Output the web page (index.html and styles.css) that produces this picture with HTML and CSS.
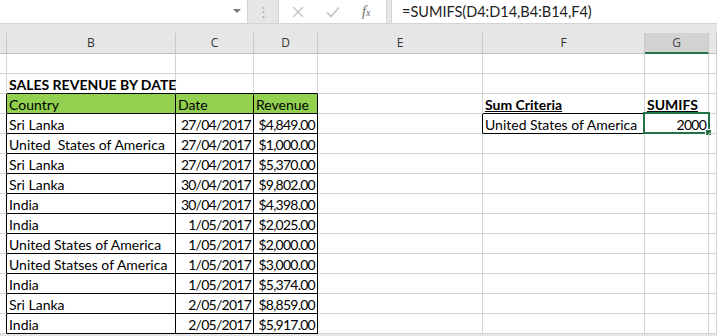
FILE: index.html
```html
<!DOCTYPE html>
<html lang="en">
<head>
    <meta charset="UTF-8">
    <title>SUMIFS by date</title>
    <link rel="stylesheet" href="styles.css">
</head>
<body>
    <div class="topbar">
        <div class="namebox"><span class="caret"></span></div>
        <div class="grip">&#8942;</div>
        <div class="fxbox">
            <svg class="ico" width="14" height="14" viewBox="0 0 14 14"><path d="M2 2 L12 12 M12 2 L2 12" stroke="#c4c4c4" stroke-width="1.4" fill="none"/></svg>
            <svg class="ico" width="16" height="14" viewBox="0 0 16 14"><path d="M2 7.5 L6 11.5 L14 2.5" stroke="#c4c4c4" stroke-width="1.6" fill="none"/></svg>
            <span class="fx">f<small>x</small></span>
        </div>
        <div class="formula">=SUMIFS(D4:D14,B4:B14,F4)</div>
    </div>

    <div class="sheet">
        <div class="ch"></div><div class="ch">B</div><div class="ch">C</div><div class="ch">D</div><div class="ch">E</div><div class="ch">F</div><div class="ch sel">G</div><div class="ch"></div>

        <div class="c"></div><div class="c"></div><div class="c"></div><div class="c"></div><div class="c"></div><div class="c"></div><div class="c"></div><div class="c"></div>

        <div class="c"></div><div class="c bb"><span class="title">SALES REVENUE BY DATE</span></div><div class="c bb"></div><div class="c bb"></div><div class="c"></div><div class="c"></div><div class="c"></div><div class="c"></div>

        <div class="c br"></div><div class="c box green">Country</div><div class="c box green">Date</div><div class="c box green">Revenue</div><div class="c"></div><div class="c bb"><b class="u">Sum Criteria</b></div><div class="c"><b class="u">SUMIFS</b></div><div class="c"></div>

        <div class="c br"></div><div class="c box">Sri Lanka</div><div class="c box num">27/04/2017</div><div class="c box num">$4,849.00</div><div class="c br"></div><div class="c box">United States of America</div><div class="c num active">2000<span class="pick"><span class="handle"></span></span></div><div class="c"></div>

        <div class="c br"></div><div class="c box">United&nbsp; States of America</div><div class="c box num">27/04/2017</div><div class="c box num">$1,000.00</div><div class="c"></div><div class="c"></div><div class="c"></div><div class="c"></div>

        <div class="c br"></div><div class="c box">Sri Lanka</div><div class="c box num">27/04/2017</div><div class="c box num">$5,370.00</div><div class="c"></div><div class="c"></div><div class="c"></div><div class="c"></div>

        <div class="c br"></div><div class="c box">Sri Lanka</div><div class="c box num">30/04/2017</div><div class="c box num">$9,802.00</div><div class="c"></div><div class="c"></div><div class="c"></div><div class="c"></div>

        <div class="c br"></div><div class="c box">India</div><div class="c box num">30/04/2017</div><div class="c box num">$4,398.00</div><div class="c"></div><div class="c"></div><div class="c"></div><div class="c"></div>

        <div class="c br"></div><div class="c box">India</div><div class="c box num">1/05/2017</div><div class="c box num">$2,025.00</div><div class="c"></div><div class="c"></div><div class="c"></div><div class="c"></div>

        <div class="c br"></div><div class="c box">United States of America</div><div class="c box num">1/05/2017</div><div class="c box num">$2,000.00</div><div class="c"></div><div class="c"></div><div class="c"></div><div class="c"></div>

        <div class="c br"></div><div class="c box">United Statses of America</div><div class="c box num">1/05/2017</div><div class="c box num">$3,000.00</div><div class="c"></div><div class="c"></div><div class="c"></div><div class="c"></div>

        <div class="c br"></div><div class="c box">India</div><div class="c box num">1/05/2017</div><div class="c box num">$5,374.00</div><div class="c"></div><div class="c"></div><div class="c"></div><div class="c"></div>

        <div class="c br"></div><div class="c box">Sri Lanka</div><div class="c box num">2/05/2017</div><div class="c box num">$8,859.00</div><div class="c"></div><div class="c"></div><div class="c"></div><div class="c"></div>

        <div class="c br"></div><div class="c box">India</div><div class="c box num">2/05/2017</div><div class="c box num">$5,917.00</div><div class="c"></div><div class="c"></div><div class="c"></div><div class="c"></div>
    </div>
</body>
</html>
```

FILE: styles.css
```css
body {
    margin: 0;
    width: 717px;
    height: 336px;
    overflow: hidden;
    background: #e6e6e6;
    font-family: Lato, "Liberation Sans", sans-serif;
}
.topbar {
    display: flex;
    height: 24px;
    border-bottom: 1px solid #d4d4d4;
    box-sizing: border-box;
    margin-bottom: 9px;
}
.namebox {
    width: 247px;
    background: white;
    border-right: 1px solid #d4d4d4;
    position: relative;
}
.caret {
    position: absolute;
    left: 233px;
    top: 9px;
    border-left: 4px solid transparent;
    border-right: 4px solid transparent;
    border-top: 4px solid #777;
}
.grip {
    width: 30px;
    text-align: center;
    color: #aaa;
    font-size: 13px;
    line-height: 22px;
}
.fxbox {
    width: 109px;
    background: white;
    border-left: 1px solid #d4d4d4;
    border-right: 1px solid #d4d4d4;
    display: flex;
    align-items: center;
    padding-left: 12px;
    box-sizing: border-box;
}
.ico {
    margin-right: 20px;
}
.fx {
    font-family: "Liberation Serif", serif;
    font-style: italic;
    font-size: 14px;
    color: #666;
    margin-left: 1px;
}
.fx small {
    font-size: 10px;
}
.formula {
    flex: 1;
    margin-left: 4px;
    background: white;
    border-left: 1px solid #d4d4d4;
    padding-left: 10px;
    font-size: 14.5px;
    line-height: 23px;
    color: #222;
}
.sheet {
    display: grid;
    grid-template-columns: 7px 169px 78px 64px 165px 162px 64px 1fr;
    grid-template-rows: 21px;
    grid-auto-rows: 20px;
    background: white;
}
.ch {
    background: #e6e6e6;
    border-right: 1px solid #c8c8c8;
    border-bottom: 1px solid #c0c0c0;
    text-align: center;
    font-family: "Open Sans", sans-serif;
    font-size: 12px;
    line-height: 20px;
    color: #333;
}
.ch.sel {
    background: #d2d2d2;
    border-bottom: 2px solid #217346;
    color: #444;
}
.c {
    box-sizing: border-box;
    border-right: 1px solid #d4d4d4;
    border-bottom: 1px solid #d4d4d4;
    font-size: 14px;
    line-height: 19px;
    padding: 1px 2px 0 2px;
    white-space: nowrap;
    color: black;
    position: relative;
}
.c.bb {
    border-bottom-color: black;
}
.c.br {
    border-right-color: black;
}
.c.box {
    border-right-color: black;
    border-bottom-color: black;
}
.green {
    background: #92d050;
}
.num {
    text-align: right;
    letter-spacing: -0.75px;
}
.title {
    font-weight: bold;
}
.u {
    text-decoration: underline;
}
.pick {
    position: absolute;
    left: -2px;
    top: -2px;
    right: -2px;
    bottom: -1px;
    border: 2px solid #217346;
}
.handle {
    position: absolute;
    right: -4px;
    bottom: -4px;
    width: 5px;
    height: 5px;
    background: #217346;
    border: 1px solid white;
}
```
